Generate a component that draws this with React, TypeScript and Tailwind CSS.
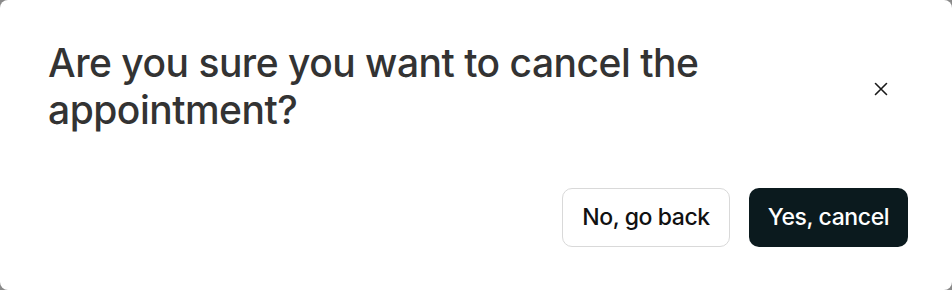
import React from "react";

export default function App() {
  return (
    <div className="w-[952px] h-[290px] bg-[#8a8a8a]">
      <div className="w-full h-full bg-white rounded-[8px] flex flex-col pl-12 pr-11 pt-[39px]">
        <div className="flex items-start justify-between">
          <h2
            className="text-[39px] leading-[47px] text-[#333333] font-medium tracking-[-0.5px] w-[700px]"
            style={{ fontFamily: 'Inter, "Liberation Sans", Arial, sans-serif' }}
          >
            Are you sure you want to cancel the appointment?
          </h2>
          <button className="mt-[42px] mr-[19px] w-4 h-4 flex items-center justify-center text-[#1a1a1a]">
            <svg width="14" height="14" viewBox="0 0 14 14" fill="none" stroke="currentColor" strokeWidth="1.6" strokeLinecap="round">
              <path d="M1.5 1.5 L12.5 12.5 M12.5 1.5 L1.5 12.5" />
            </svg>
          </button>
        </div>
        <div className="flex justify-end gap-[19px] mt-[55px]">
          <button
            className="h-[59px] w-[168px] rounded-[10px] border border-[#d9d9d9] bg-white text-[23px] font-medium tracking-[-0.4px] text-[#111111] flex items-center justify-center"
            style={{ fontFamily: 'Inter, "Noto Sans", sans-serif' }}
          >
            No, go back
          </button>
          <button
            className="h-[59px] w-[159px] rounded-[10px] bg-[#0b1a1e] text-[23px] font-medium tracking-[-0.4px] text-white flex items-center justify-center"
            style={{ fontFamily: 'Inter, "Noto Sans", sans-serif' }}
          >
            Yes, cancel
          </button>
        </div>
      </div>
    </div>
  );
}
